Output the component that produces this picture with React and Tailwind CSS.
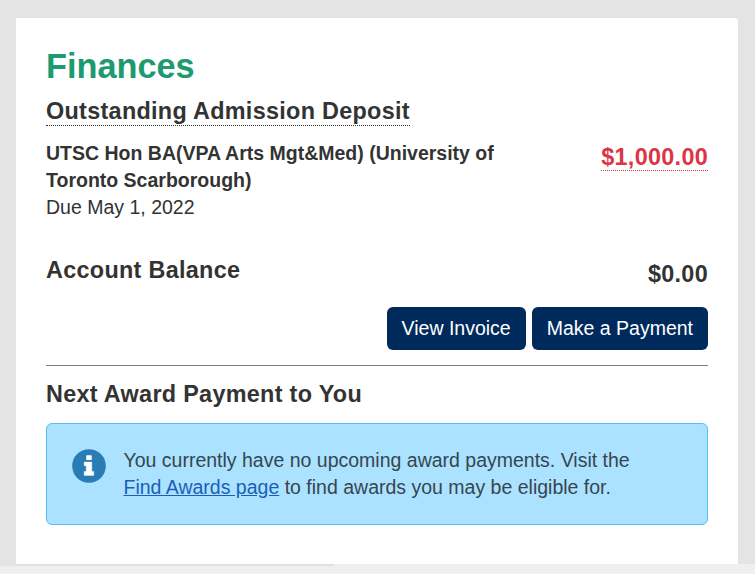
import React from 'react';

const deposit = {
  program: 'UTSC Hon BA(VPA Arts Mgt&Med) (University of Toronto Scarborough)',
  due: 'Due May 1, 2022',
  amount: '$1,000.00',
};
const balance = '$0.00';

function InfoIcon() {
  return (
    <svg viewBox="0 0 34 34" className="mt-[2px] size-[34px] shrink-0" aria-hidden="true">
      <circle cx="17" cy="17" r="16.8" fill="#297db4" />
      <rect x="14.2" y="6.2" width="5.6" height="4.8" rx="0.7" fill="#fff" />
      <path d="M12.2 13h7.6v9.4h2v4H12.2v-4h2v-5.6h-2z" fill="#fff" stroke="#fff" strokeWidth="0.4" strokeLinejoin="round" />
    </svg>
  );
}

function ActionButton({ children }) {
  return (
    <button
      type="button"
      className="h-[43px] px-[15px] rounded-[6px] bg-[#002a5c] text-white text-[19.5px] leading-[27px] whitespace-nowrap"
    >
      {children}
    </button>
  );
}

function AwardNotice() {
  return (
    <div className="mt-[15px] h-[102px] flex items-start rounded-[6px] border border-[#55bff0] bg-[#abe2ff] pt-[23px] pl-[25px]">
      <InfoIcon />
      <p className="ml-[17.5px] w-[530px] text-[19.5px] leading-[27px] text-[#354650]">
        You currently have no upcoming award payments. Visit the{' '}
        <a href="#awards" className="text-[#1b5eb8] underline">Find Awards page</a> to find awards you may be eligible for.
      </p>
    </div>
  );
}

function App() {
  return (
    <div
      className="h-[574px] w-[755px] flex flex-col overflow-hidden bg-[#efefef] text-[#333333]"
      style={{ fontFamily: '"Liberation Sans", Arial, sans-serif' }}
    >
      <div className="h-[564px] bg-[#e4e4e4] pt-[18px] pl-4">
        <section className="h-[546px] w-[722px] rounded-tr-[4px] bg-white px-[30px] pt-[28px]">
          <h1 className="text-[34.3px] leading-[40px] font-bold text-[#1e9a70]">Finances</h1>

          <h2 className="mt-[11px] h-[29px] w-fit border-b border-dotted border-[#333333] text-[23.4px] leading-[28px] font-bold tracking-[0.3px]">
            Outstanding Admission Deposit
          </h2>
          <div className="mt-[14px] flex items-start justify-between text-[19.5px] leading-[27px]">
            <div className="w-[470px]">
              <p className="font-bold">{deposit.program}</p>
              <p>{deposit.due}</p>
            </div>
            <span className="mt-[3px] h-[28px] border-b border-dotted border-[#dc3545] text-[23.4px] leading-[28px] font-bold tracking-[0.3px] text-[#dc3545]">
              {deposit.amount}
            </span>
          </div>

          <div className="mt-[35px] flex items-start justify-between text-[23.4px] leading-[28px] font-bold tracking-[0.3px]">
            <h2>Account Balance</h2>
            <span className="mt-[4px]">{balance}</span>
          </div>

          <div className="mt-[19px] flex justify-end gap-[6px]">
            <ActionButton>View Invoice</ActionButton>
            <ActionButton>Make a Payment</ActionButton>
          </div>

          <hr className="mt-[15px] border-[#808080]" />

          <h2 className="mt-[14px] text-[23.4px] leading-[28px] font-bold tracking-[0.3px]">Next Award Payment to You</h2>
          <AwardNotice />
        </section>
      </div>
      <div className="flex h-[2px]">
        <div className="w-[16px] bg-[#e4e4e4]" />
        <div className="w-[318px] bg-[#e0e0e0]" />
      </div>
    </div>
  );
}

export default App;
